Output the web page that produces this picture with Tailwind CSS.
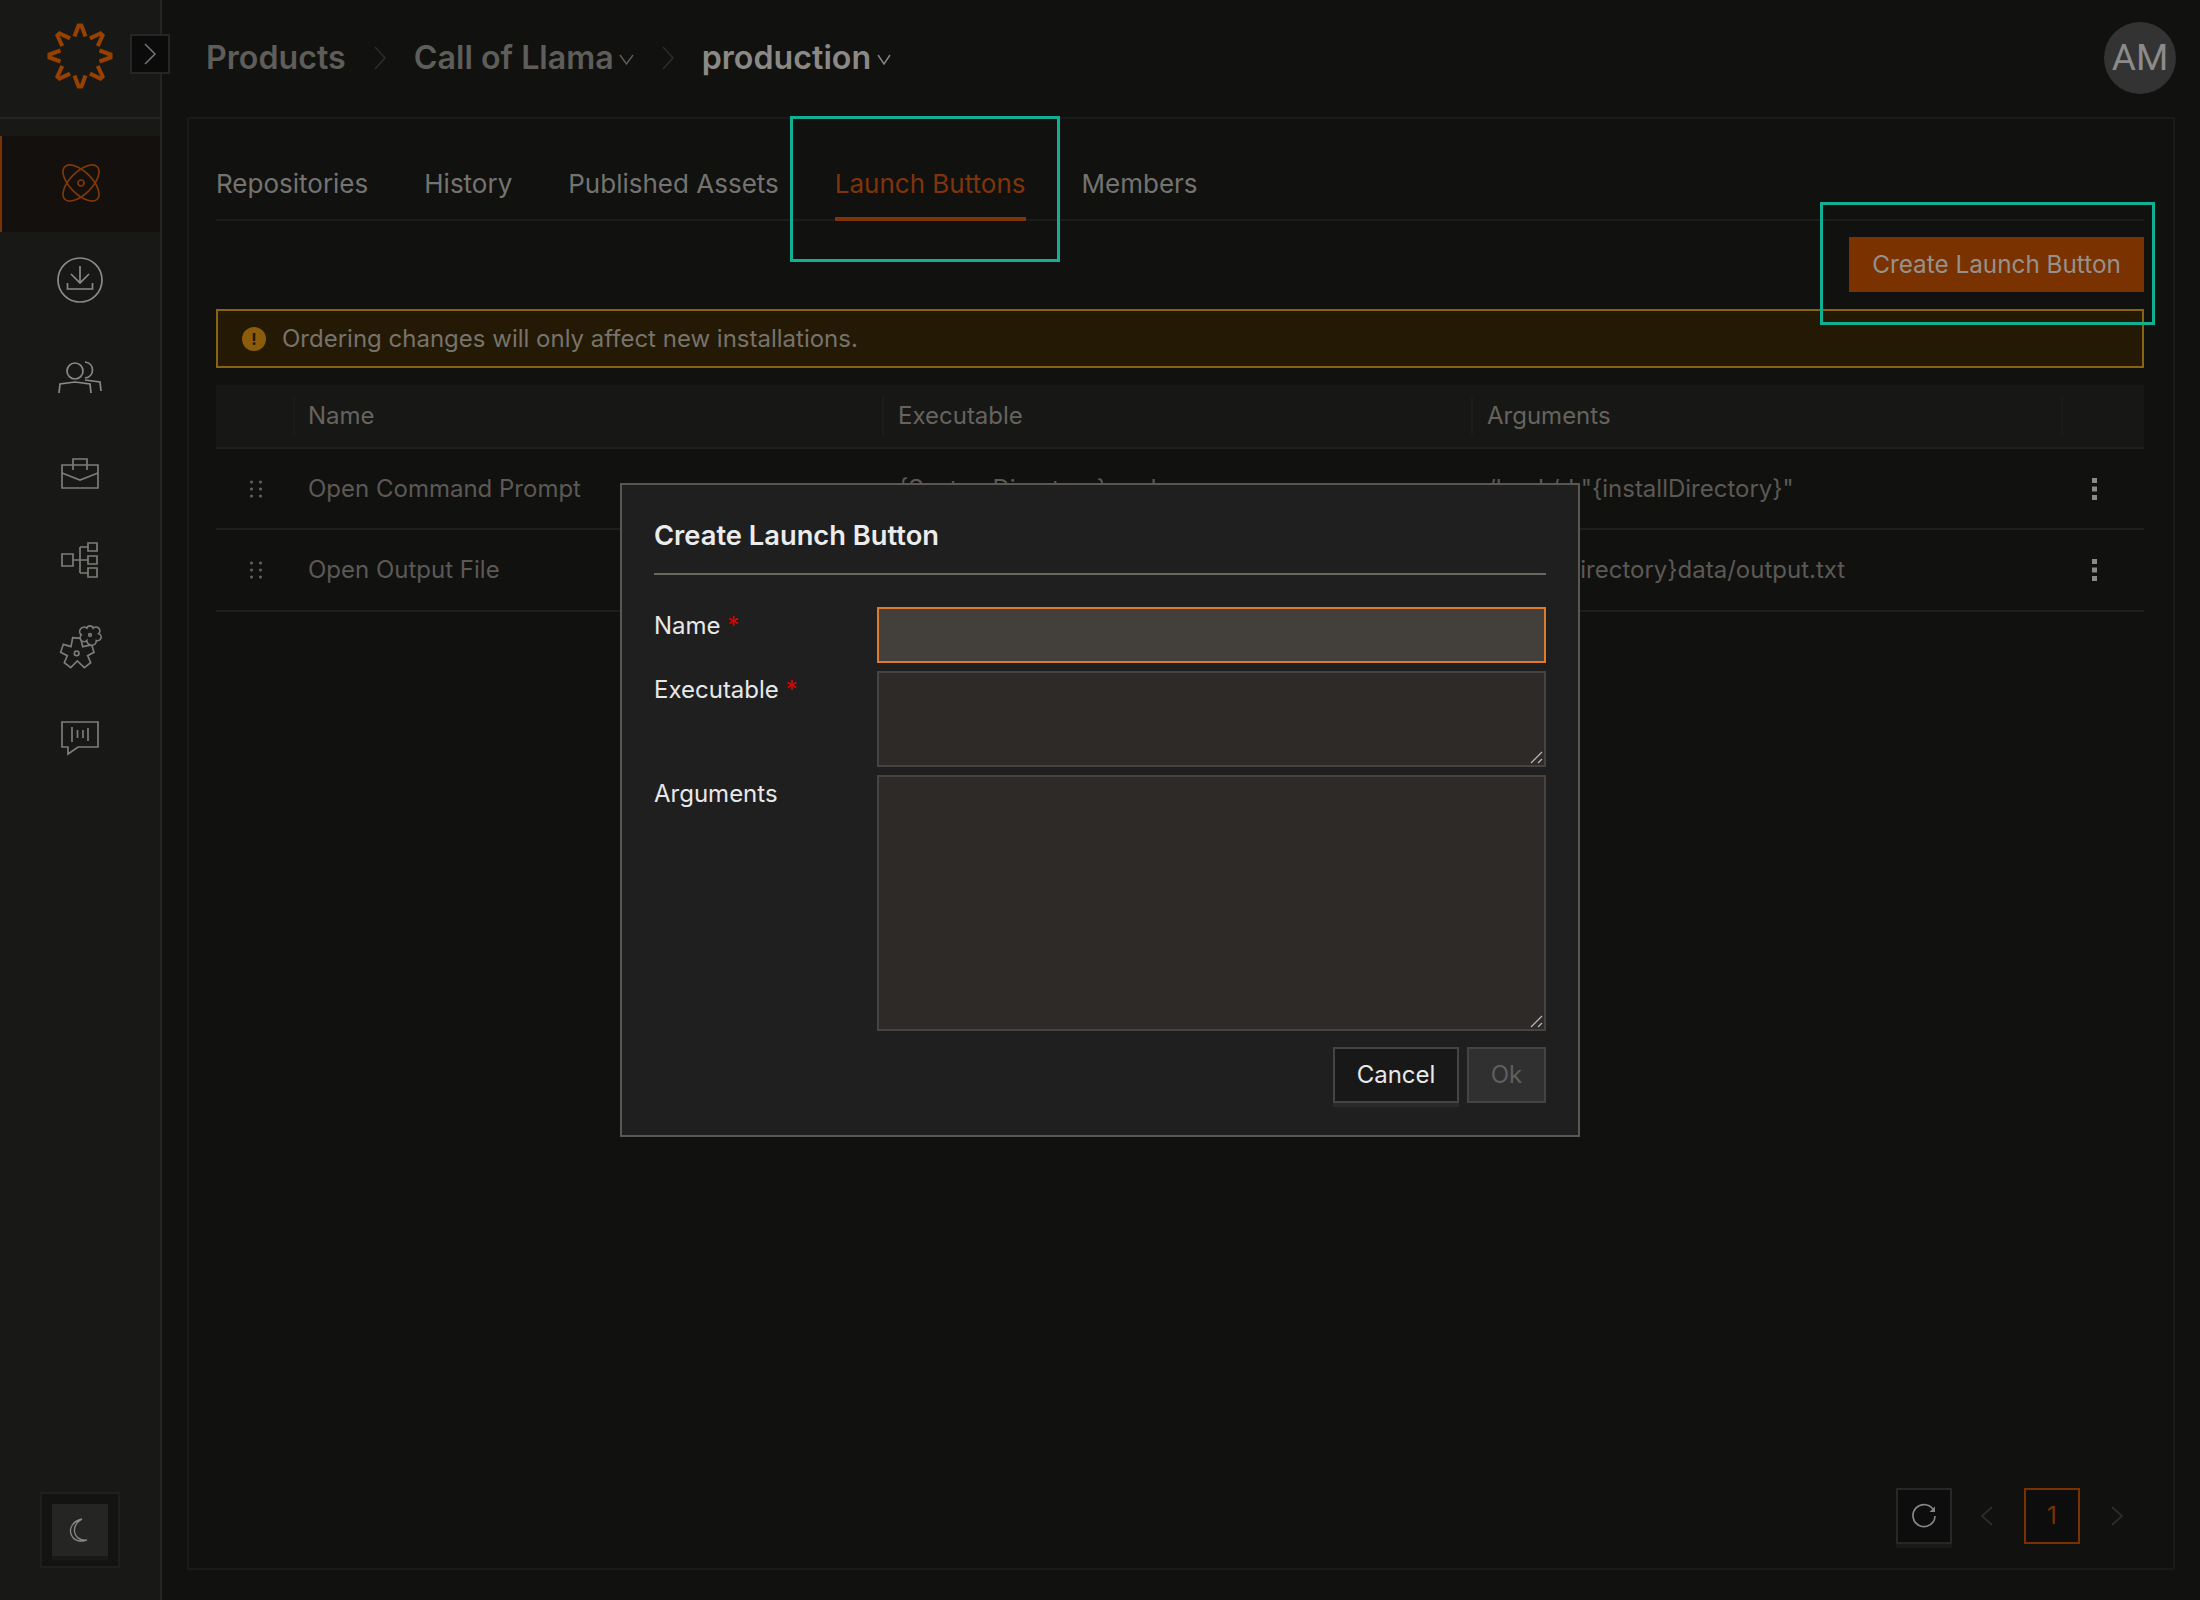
<!DOCTYPE html>
<html lang="en">
<head>
    <meta charset="UTF-8">
    <title>Launch Buttons</title>
    <script src="https://cdn.jsdelivr.net/npm/@tailwindcss/browser@4"></script>
</head>
<body class="bg-[#111110] font-[Inter,sans-serif] text-[24px] text-[#5c5955]">
<div class="relative flex w-[2200px] h-[1600px] overflow-hidden">

    <!-- sidebar -->
    <aside class="w-[162px] shrink-0 bg-[#181817] border-r-2 border-[#242423] flex flex-col">
        <div class="h-[119px] shrink-0 border-b-2 border-[#242423] flex items-center justify-center pb-[5px]">
            <svg width="72" height="72" viewBox="-36 -36 72 72" fill="none" stroke="#964100" stroke-width="4">
                <path d="M-5.5 -19.5L-1.5 -30.5H1.5L5.5 -19.5"/>
                <path transform="rotate(45)" d="M-5.5 -19.5L-1.5 -30.5H1.5L5.5 -19.5"/>
                <path transform="rotate(90)" d="M-5.5 -19.5L-1.5 -30.5H1.5L5.5 -19.5"/>
                <path transform="rotate(135)" d="M-5.5 -19.5L-1.5 -30.5H1.5L5.5 -19.5"/>
                <path transform="rotate(180)" d="M-5.5 -19.5L-1.5 -30.5H1.5L5.5 -19.5"/>
                <path transform="rotate(225)" d="M-5.5 -19.5L-1.5 -30.5H1.5L5.5 -19.5"/>
                <path transform="rotate(270)" d="M-5.5 -19.5L-1.5 -30.5H1.5L5.5 -19.5"/>
                <path transform="rotate(315)" d="M-5.5 -19.5L-1.5 -30.5H1.5L5.5 -19.5"/>
            </svg>
        </div>
        <nav class="mt-[17px] flex flex-col">
            <a class="h-[96px] flex items-center justify-center bg-[#14100d] border-l-2 border-[#7a3300]">
                <svg width="60" height="60" viewBox="-30 -29 60 60" fill="none" stroke="#7f3807" stroke-width="1.7">
                    <ellipse rx="23" ry="11" transform="rotate(45)"/>
                    <ellipse rx="23" ry="11" transform="rotate(-45)"/>
                    <circle r="3"/>
                </svg>
            </a>
            <a class="h-[96px] flex items-center justify-center">
                <svg width="60" height="60" viewBox="50 250 60 60" fill="none" stroke="#8a8a87" stroke-width="1.7">
                    <circle cx="80" cy="280" r="22"/>
                    <path d="M80 266V283M71 274L80 283L89 274M67.5 283V289H92.5V283"/>
                </svg>
            </a>
            <a class="h-[98px] flex items-center justify-center">
                <svg width="60" height="60" viewBox="50 347 60 60" fill="none" stroke="#8a8a87" stroke-width="1.7">
                    <circle cx="75" cy="371" r="8"/>
                    <path d="M59 393L60 384L75 382L90 384L91 393M85 362C95 363 95 377 85 378M85 380L100 382L101 391"/>
                </svg>
            </a>
            <a class="h-[94px] flex items-center justify-center">
                <svg width="60" height="60" viewBox="50 443 60 60" fill="none" stroke="#7c7c79" stroke-width="1.7">
                    <path d="M62 465H98V488H62ZM73 470V459H87V470M62 473L80 480L98 473"/>
                </svg>
            </a>
            <a class="h-[80px] flex items-center justify-center">
                <svg width="60" height="60" viewBox="50 530 60 60" fill="none" stroke="#7c7c79" stroke-width="1.7">
                    <path d="M62 554H73V566H62ZM73 560H88M80 547V573M80 547H88M80 573H88M88 543H97V551H88ZM88 556H97V564H88ZM88 568H97V577H88Z"/>
                </svg>
            </a>
            <a class="h-[90px] flex items-center justify-center">
                <svg width="60" height="60" viewBox="0 0 180 180" fill="none" stroke="#7c7c79" stroke-width="5">
                    <path d="M68 68L92 70L98 95L125 90L132 112L113 122L122 143L103 158L82 138L62 158L43 143L52 122L32 112L40 88L63 95Z"/>
                    <circle cx="80" cy="115" r="7"/>
                    <path fill="#181817" d="M129.5 39.5A10 10 0 0 1 146 56A10 10 0 0 1 139 76.5A10 10 0 0 1 110.5 76.5A10 10 0 0 1 94 60A10 10 0 0 1 110.5 39.5A10 10 0 0 1 129.5 39.5Z"/>
                    <circle cx="120" cy="60" r="4"/>
                </svg>
            </a>
            <a class="h-[94px] flex items-center justify-center">
                <svg width="60" height="60" viewBox="50 707 60 60" fill="none" stroke="#7c7c79" stroke-width="1.7">
                    <path d="M62 722H98V747H78L68 754V747H62ZM72 727V742M77.5 730V738M83 730V738M88 728V741"/>
                </svg>
            </a>
        </nav>
        <div class="mt-auto mb-[32px] mx-auto w-[80px] h-[76px] bg-[#131312] border-2 border-[#1f1f1e] flex items-center justify-center">
            <div class="w-[56px] h-[52px] bg-[#252524] shadow-[0_4px_0_#191918] flex items-center justify-center">
                <svg width="24" height="28" viewBox="0 0 24 28" fill="none" stroke="#8a8a87" stroke-width="1.3">
                    <path d="M14 3C5 5 1 12 3 18C5 24 12 27 19 24C12 25 7 21 6.5 15C6 10 9 6 14 3Z"/>
                </svg>
            </div>
        </div>
    </aside>

    <!-- collapse toggle sits over the sidebar edge -->
    <button class="absolute left-[130px] top-[34px] w-[40px] h-[40px] bg-[#0b0b0b] border-2 border-[#262625] flex items-center justify-center">
        <svg width="14" height="22" viewBox="0 0 14 22" fill="none" stroke="#77756f" stroke-width="1.5"><path d="M2 1L12 11L2 21"/></svg>
    </button>

    <div class="flex-1 min-w-0 flex flex-col">
        <!-- breadcrumb -->
        <header class="h-[117px] shrink-0 flex items-center pl-[44px] pr-[24px] pb-[1px]">
            <span class="text-[32.2px] font-semibold text-[#5f5d59]">Products</span>
            <svg class="mx-[27px]" width="14" height="26" viewBox="0 0 14 26" fill="none" stroke="#2e2d2b" stroke-width="1.5"><path d="M2 2L12 13L2 24"/></svg>
            <span class="text-[32.2px] font-semibold text-[#5f5d59]">Call of Llama</span>
            <svg class="ml-[5px] mt-[3px]" width="15" height="11" viewBox="0 0 15 11" fill="none" stroke="#5f5d59" stroke-width="1.4"><path d="M1 1L7.5 10L14 1"/></svg>
            <svg class="mx-[27px]" width="14" height="26" viewBox="0 0 14 26" fill="none" stroke="#2e2d2b" stroke-width="1.5"><path d="M2 2L12 13L2 24"/></svg>
            <span class="text-[32.2px] font-semibold text-[#8b8985]">production</span>
            <svg class="ml-[6px] mt-[3px]" width="14" height="11" viewBox="0 0 14 11" fill="none" stroke="#8b8985" stroke-width="1.4"><path d="M1 1L7 10L13 1"/></svg>
            <div class="ml-auto w-[72px] h-[72px] rounded-full bg-[#333333] flex items-center justify-center font-[Roboto,sans-serif] text-[37px] text-[#8b8b8b]">AM</div>
        </header>

        <!-- content card -->
        <main class="flex-1 ml-[25px] mr-[25px] mb-[30px] border-2 border-[#1a1a19] pl-[27px] pr-[29px] pb-[24px] flex flex-col">
            <div class="h-[102px] shrink-0 border-b-2 border-[#1c1c1b] flex gap-[56px] text-[26px] text-[#75736f]">
                <a class="h-[102px] flex items-center pt-[26px]">Repositories</a>
                <a class="h-[102px] flex items-center pt-[26px]">History</a>
                <a class="h-[102px] flex items-center pt-[26px]">Published Assets</a>
                <a class="h-[102px] flex items-center pt-[30px] text-[#80340a] border-b-4 border-[#80340a]">Launch Buttons</a>
                <a class="h-[102px] flex items-center pt-[26px]">Members</a>
            </div>
            <div class="mt-[16px] flex justify-end">
                <button class="h-[55px] w-[295px] bg-[#7a3300] text-[24.3px] text-[#96918c]">Create Launch Button</button>
            </div>
            <div class="mt-[17px] h-[59px] bg-[#231904] border-2 border-[#8a6310] flex items-center pl-[24px] gap-[16px] text-[#77736c]">
                <span class="w-[24px] h-[24px] rounded-full bg-[#8a5c0c] flex items-center justify-center text-[16px] font-bold text-[#231904]">!</span>
                <span>Ordering changes will only affect new installations.</span>
            </div>
            <div class="mt-[17px] grid grid-cols-[79px_589px_589px_590px_81px]">
                <div class="col-span-5 grid grid-cols-subgrid h-[64px] bg-[#171716] border-b-2 border-[#1f1f1e] items-center text-[#66635f]">
                    <div class="h-[38px] border-r-2 border-[#1c1c1b]"></div>
                    <div class="h-[38px] border-r-2 border-[#1c1c1b] pl-[13px] flex items-center">Name</div>
                    <div class="h-[38px] border-r-2 border-[#1c1c1b] pl-[14px] flex items-center">Executable</div>
                    <div class="h-[38px] border-r-2 border-[#1c1c1b] pl-[14px] flex items-center">Arguments</div>
                    <div></div>
                </div>
                <div class="col-span-5 grid grid-cols-subgrid h-[81px] border-b-2 border-[#1f1f1e] items-center">
                    <div class="pl-[34px]">
                        <svg width="12" height="18" viewBox="0 0 12 18" fill="#66635f"><circle cx="1.5" cy="2" r="1.5"/><circle cx="10.5" cy="2" r="1.5"/><circle cx="1.5" cy="9" r="1.5"/><circle cx="10.5" cy="9" r="1.5"/><circle cx="1.5" cy="16" r="1.5"/><circle cx="10.5" cy="16" r="1.5"/></svg>
                    </div>
                    <div class="pl-[13px]">Open Command Prompt</div>
                    <div class="pl-[14px]">{SystemDirectory}cmd.exe</div>
                    <div class="pl-[14px]">/k cd /d "{installDirectory}"</div>
                    <div class="pl-[29px]">
                        <svg width="5" height="22" viewBox="0 0 5 22" fill="#8a8a86"><rect width="5" height="5"/><rect y="8.5" width="5" height="5"/><rect y="17" width="5" height="5"/></svg>
                    </div>
                </div>
                <div class="col-span-5 grid grid-cols-subgrid h-[82px] border-b-2 border-[#1f1f1e] items-center">
                    <div class="pl-[34px]">
                        <svg width="12" height="18" viewBox="0 0 12 18" fill="#66635f"><circle cx="1.5" cy="2" r="1.5"/><circle cx="10.5" cy="2" r="1.5"/><circle cx="1.5" cy="9" r="1.5"/><circle cx="10.5" cy="9" r="1.5"/><circle cx="1.5" cy="16" r="1.5"/><circle cx="10.5" cy="16" r="1.5"/></svg>
                    </div>
                    <div class="pl-[13px]">Open Output File</div>
                    <div class="pl-[14px]">notepad.exe</div>
                    <div class="pl-[14px]">{installDirectory}data/output.txt</div>
                    <div class="pl-[29px]">
                        <svg width="5" height="22" viewBox="0 0 5 22" fill="#8a8a86"><rect width="5" height="5"/><rect y="8.5" width="5" height="5"/><rect y="17" width="5" height="5"/></svg>
                    </div>
                </div>
            </div>

            <!-- pagination -->
            <div class="mt-auto flex items-center justify-end gap-[26px] pr-[18px]">
                <button class="w-[56px] h-[56px] bg-[#0d0d0d] border-2 border-[#272726] shadow-[0_4px_0_#191918] flex items-center justify-center">
                    <svg width="26" height="26" viewBox="0 0 26 26" fill="none" stroke="#858582" stroke-width="1.7"><path d="M23 8A11 11 0 1 0 24 13"/><path d="M24 3.5V9H18.5Z" fill="#858582" stroke="none"/></svg>
                </button>
                <svg width="20" height="20" viewBox="0 0 20 20" fill="none" stroke="#2e2d2b" stroke-width="1.7"><path d="M14 1L4 10L14 19"/></svg>
                <button class="w-[56px] h-[56px] bg-[#0d0d0d] border-2 border-[#7a3300] text-[#7a3300]">1</button>
                <svg width="20" height="20" viewBox="0 0 20 20" fill="none" stroke="#2e2d2b" stroke-width="1.7"><path d="M6 1L16 10L6 19"/></svg>
            </div>
        </main>
    </div>

    <!-- annotation boxes -->
    <div class="absolute left-[790px] top-[116px] w-[270px] h-[146px] border-[3px] border-[#0fb093]"></div>
    <div class="absolute left-[1820px] top-[202px] w-[335px] h-[123px] border-[3px] border-[#0fb093]"></div>

    <!-- dialog -->
    <div class="absolute left-[620px] top-[483px] w-[960px] h-[654px] bg-[#1f1f1f] border-2 border-[#5a5752] px-[32px]">
        <div class="h-[90px] border-b-2 border-[#6a6660] flex items-center pt-[15px]">
            <h2 class="text-[27.3px] font-semibold text-[#ececec]">Create Launch Button</h2>
        </div>
        <div class="mt-[32px] grid grid-cols-[223px_1fr] gap-y-[8px] text-[#e8e8e8]">
            <label class="leading-[38px]">Name <span class="text-[#e00000]">*</span></label>
            <input class="h-[56px] bg-[#433f3b] border-2 border-[#e07b2b] outline-none">
            <label class="leading-[38px]">Executable <span class="text-[#e00000]">*</span></label>
            <div class="relative h-[96px]">
                <textarea class="block w-full h-full resize-none bg-[#2d2a28] border-2 border-[#454442]"></textarea>
                <svg class="absolute right-[3px] bottom-[3px]" width="13" height="13" viewBox="0 0 13 13" fill="none" stroke="#b5b5b5" stroke-width="1.3"><path d="M1 12L12 1M8 12L12 8"/></svg>
            </div>
            <label class="leading-[38px]">Arguments</label>
            <div class="relative h-[256px]">
                <textarea class="block w-full h-full resize-none bg-[#2d2a28] border-2 border-[#454442]"></textarea>
                <svg class="absolute right-[3px] bottom-[3px]" width="13" height="13" viewBox="0 0 13 13" fill="none" stroke="#b5b5b5" stroke-width="1.3"><path d="M1 12L12 1M8 12L12 8"/></svg>
            </div>
        </div>
        <div class="mt-[16px] flex justify-end gap-[8px]">
            <button class="w-[126px] h-[56px] bg-[#181818] border-2 border-[#454442] shadow-[0_4px_0_#2a2a2a] text-[#e8e8e8]">Cancel</button>
            <button class="w-[79px] h-[56px] bg-[#303030] border-2 border-[#454442] text-[#5f5f5f]">Ok</button>
        </div>
    </div>
</div>
</body>
</html>
